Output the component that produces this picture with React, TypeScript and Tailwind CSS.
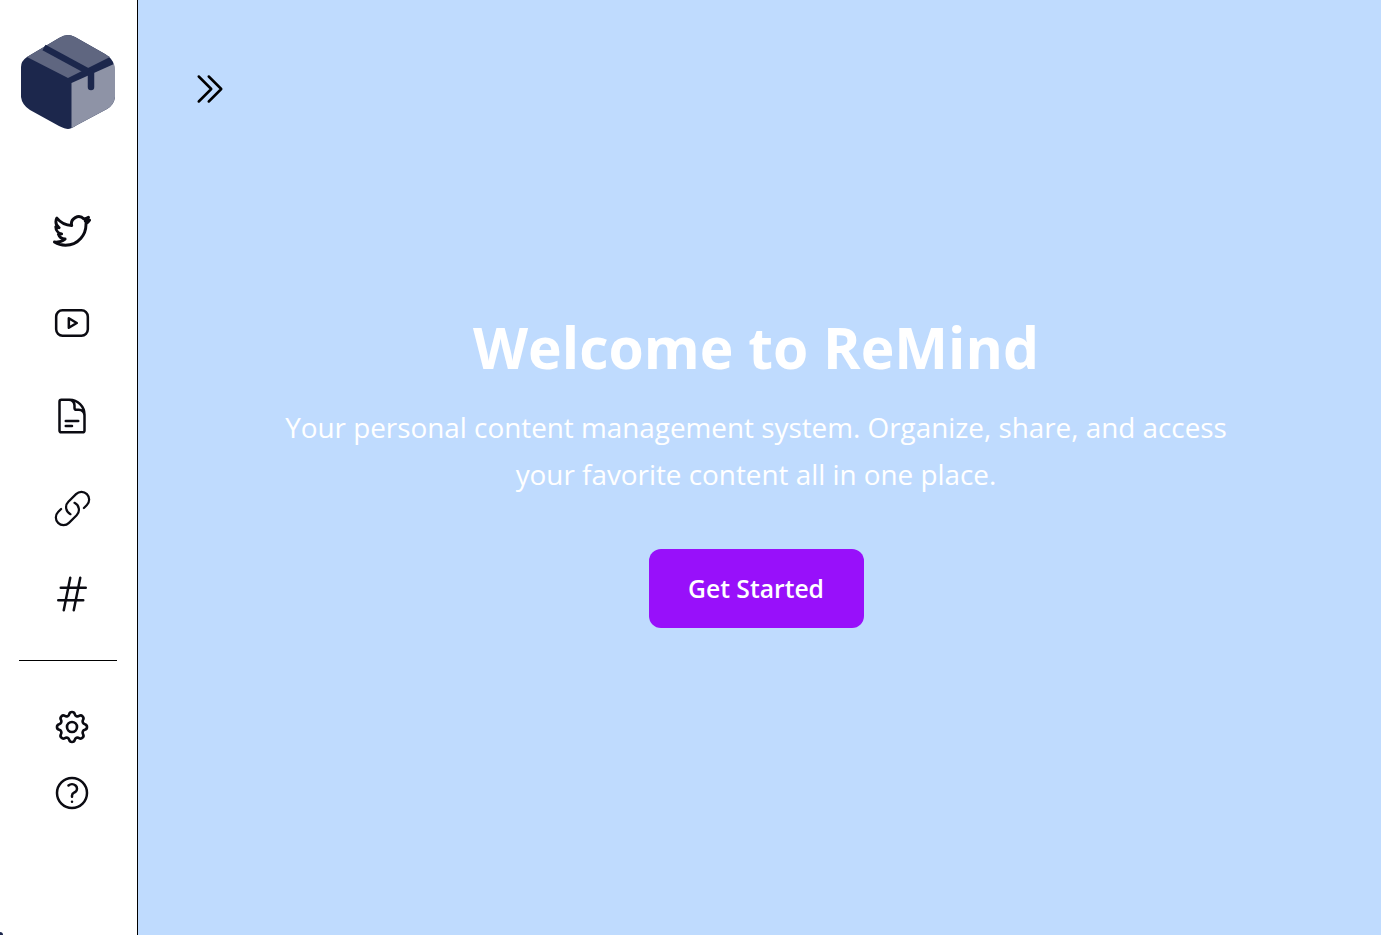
import React from 'react';
import { TbBrandYoutube, TbSettings } from 'react-icons/tb';
import { HiOutlineChevronDoubleRight, HiOutlineDocumentText, HiOutlineHashtag, HiOutlineLink, HiOutlineQuestionMarkCircle } from 'react-icons/hi2';

const Logo = () => (
  <svg width="94" height="94" viewBox="0 0 94 94" className="block">
    <path d="M47 0 Q50 0 54 2 L84 19 Q92 24 93 30 Q94 35 94 62 Q93 70 86 74 L56 90 Q50 94 47 94 Q44 94 38 91 L9 75 Q1 70 0 62 L0 32 Q0 26 6 22 L38 3 Q43 0 47 0Z" fill="#1c274c" />
    <path d="M47 0 Q50 0 54 2 L84 19 Q87 21 89 22 L47 43 L6 22 L38 3 Q43 0 47 0Z" fill="#5f6680" />
    <path d="M50.5 48 L93 29 Q94 32 94 36 L94 62 Q93 70 86 74 L56 90 Q53 92 50.5 93Z" fill="#8e93a6" />
    <path d="M23 12.5 L70 38" fill="none" stroke="#1c274c" strokeWidth="6.5" />
    <path d="M70 38 L70 52" fill="none" stroke="#1c274c" strokeWidth="6.5" strokeLinecap="round" />
  </svg>
);

const TwitterIcon = () => (
  <svg width="38" height="38" viewBox="-1 -1 26 26" fill="none" stroke="currentColor" strokeWidth="2" strokeLinejoin="round">
    <path d="M23.953 4.57a10 10 0 01-2.825.775 4.958 4.958 0 002.163-2.723c-.951.555-2.005.959-3.127 1.184a4.92 4.92 0 00-8.384 4.482C7.69 8.095 4.067 6.13 1.64 3.162a4.822 4.822 0 00-.666 2.475c0 1.71.87 3.213 2.188 4.096a4.904 4.904 0 01-2.228-.616v.06a4.923 4.923 0 003.946 4.827 4.996 4.996 0 01-2.212.085 4.936 4.936 0 004.604 3.417 9.867 9.867 0 01-6.102 2.105c-.39 0-.779-.023-1.17-.067a13.995 13.995 0 007.557 2.209c9.053 0 13.998-7.496 13.998-13.985 0-.21 0-.42-.015-.63A9.935 9.935 0 0024 4.59z" />
  </svg>
);

export default function App() {
  return (
    <div className="flex h-[935px] w-full overflow-hidden bg-[#bfdbfe] font-['Open_Sans','Noto_Sans',sans-serif]">
      <aside className="relative flex w-[138px] shrink-0 flex-col border-r border-black bg-white text-[#0b0b12]">
        <div className="pl-[21px] pt-[35px]">
          <Logo />
        </div>
        <nav className="mt-[78px] flex flex-col items-center pl-[7px]">
          <div className="flex h-[46px] items-center pt-px"><TwitterIcon /></div>
          <div className="mt-[47px] flex h-[46px] items-center"><TbBrandYoutube size={38} strokeWidth={1.6} /></div>
          <div className="mt-[47px] flex h-[46px] items-center"><HiOutlineDocumentText size={40} /></div>
          <div className="mt-[46px] flex h-[46px] items-center"><HiOutlineLink size={41} strokeWidth={1.3} /></div>
          <div className="mt-[40px] flex h-[46px] items-center"><HiOutlineHashtag size={40} /></div>
        </nav>
        <div className="mx-[19px] mt-[43px] h-px w-[98px] bg-black" />
        <div className="mt-[43px] flex flex-col items-center pl-[7px]">
          <div className="flex h-[46px] items-center"><TbSettings size={40} strokeWidth={1.6} /></div>
          <div className="mt-[20px] flex h-[46px] items-center"><HiOutlineQuestionMarkCircle size={40} /></div>
        </div>
        <div className="absolute bottom-0 left-0 h-[3px] w-[3px] rounded-tr-full bg-[#1c274c]" />
      </aside>
      <main className="relative flex flex-1 flex-col items-center justify-center pr-[7px] pt-[12px] text-center text-white">
        <button className="absolute left-[52px] top-[69px] text-black">
          <HiOutlineChevronDoubleRight size={40} />
        </button>
        <h1 className="text-[57px] font-bold leading-none">Welcome to ReMind</h1>
        <p className="mt-[28px] w-[960px] text-[27.85px] font-normal leading-[47px]">
          Your personal content management system. Organize, share, and access your favorite content all in one place.
        </p>
        <button className="mt-[51px] h-[79px] w-[215px] rounded-xl bg-[#9810fa] text-[24.7px] font-semibold text-white">Get Started</button>
      </main>
    </div>
  );
}
